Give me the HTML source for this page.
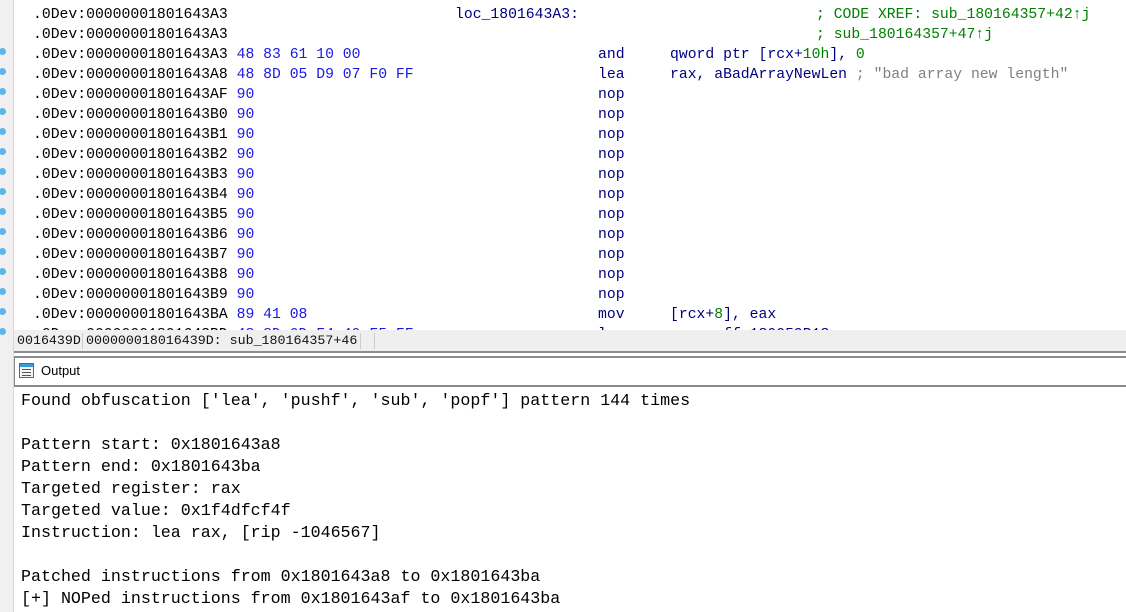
<!DOCTYPE html>
<html><head><meta charset="utf-8"><style>
*{margin:0;padding:0;box-sizing:border-box}
body{width:1126px;height:612px;overflow:hidden;background:#fff;position:relative;font-family:"Liberation Mono",monospace}
.gut{position:absolute;left:0;top:0;width:13px;height:612px;background:#f0f0f0}
.vl{position:absolute;left:13px;top:0;width:1px;height:612px;background:#d8d8d8}
.code{position:absolute;left:14px;top:0;width:1112px;height:330px;overflow:hidden;font-size:14.75px}
.r{position:absolute;height:20px;line-height:20px;white-space:pre;color:#000}
.dot{position:absolute;left:-1px;width:7px;height:7px;border-radius:50%;background:#5ab4f0}
.h{color:#1a1ae6}.m{color:#000080}.g{color:#008000}.s{color:#808080}
.sb{position:absolute;left:14px;top:330px;width:1112px;height:22px;background:#efefef;font-size:13.3px;line-height:22px;white-space:pre;color:#111}
.ln{position:absolute;left:14px;width:1112px;height:2px;background:#8a8a90}
.out{position:absolute;left:21px;top:390px;font-size:16.65px;line-height:22px;white-space:pre;color:#000}
</style></head><body>
<div class="gut"></div><div class="vl"></div>
<div class="code">
<div class="r" style="top:5px;left:19px">.0Dev:00000001801643A3</div><div class="r" style="top:5px;left:441px"><span class="m">loc_1801643A3:</span></div><div class="r g" style="top:5px;left:802px">; CODE XREF: sub_180164357+42↑j</div>
<div class="r" style="top:25px;left:19px">.0Dev:00000001801643A3</div><div class="r g" style="top:25px;left:802px">; sub_180164357+47↑j</div>
<div class="r" style="top:45px;left:19px">.0Dev:00000001801643A3 <span class="h">48 83 61 10 00</span></div><div class="r m" style="top:45px;left:584px">and</div><div class="r m" style="top:45px;left:656px">qword ptr [rcx+<span class="g">10h</span>], <span class="g">0</span></div>
<div class="r" style="top:65px;left:19px">.0Dev:00000001801643A8 <span class="h">48 8D 05 D9 07 F0 FF</span></div><div class="r m" style="top:65px;left:584px">lea</div><div class="r m" style="top:65px;left:656px">rax, aBadArrayNewLen <span class="s">; "bad array new length"</span></div>
<div class="r" style="top:85px;left:19px">.0Dev:00000001801643AF <span class="h">90</span></div><div class="r m" style="top:85px;left:584px">nop</div>
<div class="r" style="top:105px;left:19px">.0Dev:00000001801643B0 <span class="h">90</span></div><div class="r m" style="top:105px;left:584px">nop</div>
<div class="r" style="top:125px;left:19px">.0Dev:00000001801643B1 <span class="h">90</span></div><div class="r m" style="top:125px;left:584px">nop</div>
<div class="r" style="top:145px;left:19px">.0Dev:00000001801643B2 <span class="h">90</span></div><div class="r m" style="top:145px;left:584px">nop</div>
<div class="r" style="top:165px;left:19px">.0Dev:00000001801643B3 <span class="h">90</span></div><div class="r m" style="top:165px;left:584px">nop</div>
<div class="r" style="top:185px;left:19px">.0Dev:00000001801643B4 <span class="h">90</span></div><div class="r m" style="top:185px;left:584px">nop</div>
<div class="r" style="top:205px;left:19px">.0Dev:00000001801643B5 <span class="h">90</span></div><div class="r m" style="top:205px;left:584px">nop</div>
<div class="r" style="top:225px;left:19px">.0Dev:00000001801643B6 <span class="h">90</span></div><div class="r m" style="top:225px;left:584px">nop</div>
<div class="r" style="top:245px;left:19px">.0Dev:00000001801643B7 <span class="h">90</span></div><div class="r m" style="top:245px;left:584px">nop</div>
<div class="r" style="top:265px;left:19px">.0Dev:00000001801643B8 <span class="h">90</span></div><div class="r m" style="top:265px;left:584px">nop</div>
<div class="r" style="top:285px;left:19px">.0Dev:00000001801643B9 <span class="h">90</span></div><div class="r m" style="top:285px;left:584px">nop</div>
<div class="r" style="top:305px;left:19px">.0Dev:00000001801643BA <span class="h">89 41 08</span></div><div class="r m" style="top:305px;left:584px">mov</div><div class="r m" style="top:305px;left:656px">[rcx+<span class="g">8</span>], eax</div>
<div class="r" style="top:325px;left:19px">.0Dev:00000001801643BD <span class="h">48 8D 0D F4 49 F5 FF</span></div><div class="r m" style="top:325px;left:584px">lea</div><div class="r m" style="top:325px;left:656px">rcx, off_180059B18</div>
</div>
<div class="dot" style="top:48px"></div><div class="dot" style="top:68px"></div><div class="dot" style="top:88px"></div><div class="dot" style="top:108px"></div><div class="dot" style="top:128px"></div><div class="dot" style="top:148px"></div><div class="dot" style="top:168px"></div><div class="dot" style="top:188px"></div><div class="dot" style="top:208px"></div><div class="dot" style="top:228px"></div><div class="dot" style="top:248px"></div><div class="dot" style="top:268px"></div><div class="dot" style="top:288px"></div><div class="dot" style="top:308px"></div><div class="dot" style="top:328px"></div>
<div class="sb"><span style="position:absolute;left:3px">0016439D</span><span style="position:absolute;left:68px;top:3px;width:1px;height:16px;background:#ccc"></span><span style="position:absolute;left:72px">000000018016439D: sub_180164357+46</span><span style="position:absolute;left:346px;top:3px;width:1px;height:16px;background:#ccc"></span><span style="position:absolute;left:360px;top:3px;width:1px;height:16px;background:#ccc"></span></div>
<div class="ln" style="top:351px"></div>
<div class="ln" style="top:356px"></div>
<div class="ln" style="top:385px"></div>
<div style="position:absolute;left:14px;top:358px;width:1px;height:27px;background:#8a8a90"></div>
<div style="position:absolute;left:19px;top:363px;width:15px;height:15px;border:1px solid #666;background:#f4f4f4">
<div style="height:3px;background:#3a9ad9"></div>
<div style="margin:2px 2px 0;height:1px;background:#555"></div><div style="margin:2px 2px 0;height:1px;background:#555"></div><div style="margin:2px 2px 0;height:1px;background:#555"></div>
</div>
<div style="position:absolute;left:41px;top:363px;font-family:'Liberation Sans',sans-serif;font-size:13px;line-height:16px;color:#000">Output</div>
<div class="out">Found obfuscation ['lea', 'pushf', 'sub', 'popf'] pattern 144 times

Pattern start: 0x1801643a8
Pattern end: 0x1801643ba
Targeted register: rax
Targeted value: 0x1f4dfcf4f
Instruction: lea rax, [rip -1046567]

Patched instructions from 0x1801643a8 to 0x1801643ba
[+] NOPed instructions from 0x1801643af to 0x1801643ba</div>
</body></html>
